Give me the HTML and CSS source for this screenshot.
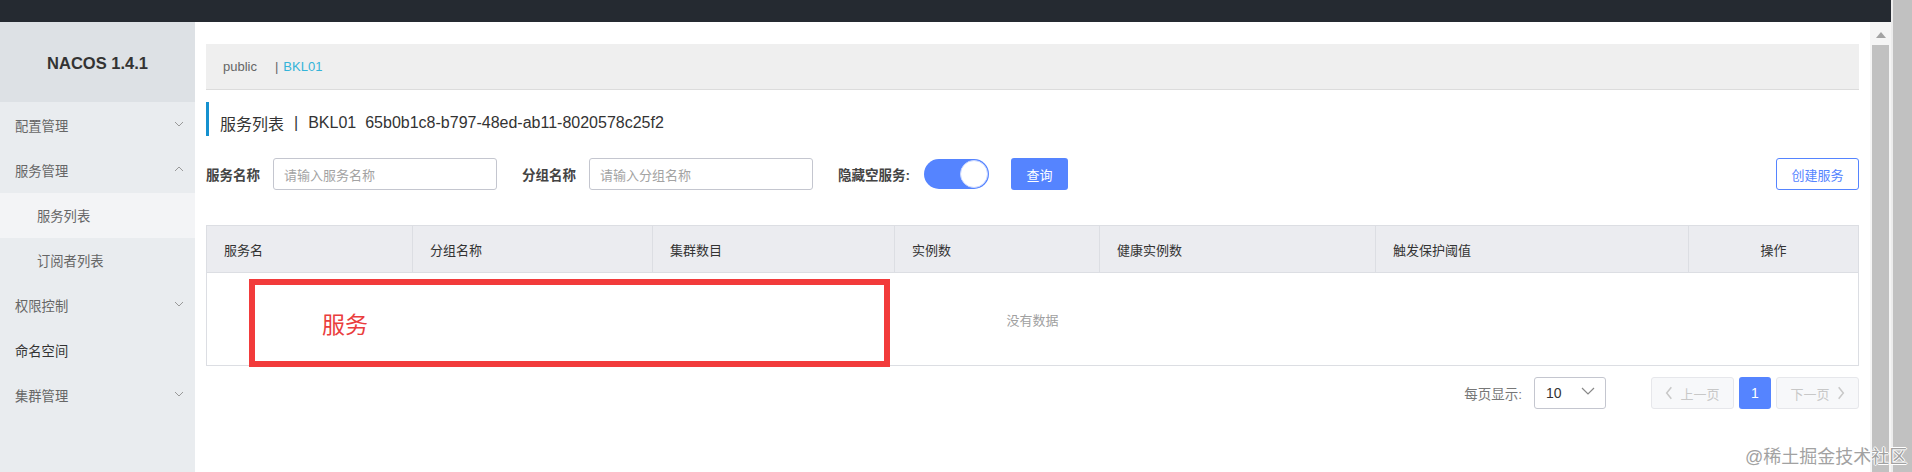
FILE: index.html
```html
<!DOCTYPE html>
<html lang="zh-CN">
<head>
<meta charset="utf-8">
<title>NACOS 1.4.1</title>
<link rel="stylesheet" href="styles.css">
</head>
<body>
<div class="screen">
  <div class="app">
    <header class="topbar"></header>
    <div class="main">
      <aside class="sidebar">
        <div class="logo">NACOS 1.4.1</div>
        <ul class="menu">
          <li class="menu-item"><span>配置管理</span><svg class="chev" viewBox="0 0 10 6"><polyline points="1,1 5,5 9,1"/></svg></li>
          <li class="menu-item"><span>服务管理</span><svg class="chev" viewBox="0 0 10 6"><polyline points="1,5 5,1 9,5"/></svg></li>
          <li class="menu-item sub active"><span>服务列表</span></li>
          <li class="menu-item sub"><span>订阅者列表</span></li>
          <li class="menu-item"><span>权限控制</span><svg class="chev" viewBox="0 0 10 6"><polyline points="1,1 5,5 9,1"/></svg></li>
          <li class="menu-item dark"><span>命名空间</span></li>
          <li class="menu-item"><span>集群管理</span><svg class="chev" viewBox="0 0 10 6"><polyline points="1,1 5,5 9,1"/></svg></li>
        </ul>
      </aside>
      <main class="content">
        <div class="breadcrumb">
          <span>public</span><span class="crumb-sep">|</span><span class="crumb-current">BKL01</span>
        </div>
        <div class="page-title">
          <span>服务列表</span><span class="title-sep">|</span><span>BKL01</span><span class="title-id">65b0b1c8-b797-48ed-ab11-8020578c25f2</span>
        </div>
        <div class="search">
          <span class="field-label">服务名称</span>
          <div class="input">请输入服务名称</div>
          <span class="field-label">分组名称</span>
          <div class="input">请输入分组名称</div>
          <span class="field-label toggle-label">隐藏空服务:</span>
          <div class="toggle"><div class="knob"></div></div>
          <div class="btn-primary">查询</div>
          <div class="btn-outline">创建服务</div>
        </div>
        <div class="table">
          <div class="thead">
            <div class="th">服务名</div>
            <div class="th">分组名称</div>
            <div class="th">集群数目</div>
            <div class="th">实例数</div>
            <div class="th">健康实例数</div>
            <div class="th">触发保护阈值</div>
            <div class="th center">操作</div>
          </div>
          <div class="tbody">没有数据</div>
          <div class="annot"><span>服务</span></div>
        </div>
        <div class="pager">
          <span class="pager-label">每页显示:</span>
          <div class="select"><span>10</span><svg class="sel-chev" viewBox="0 0 14 8"><polyline points="1,1 7,7 13,1"/></svg></div>
          <div class="pg-btn prev"><svg class="pg-chev" viewBox="0 0 6 12"><polyline points="5,1 1,6 5,11"/></svg><span>上一页</span></div>
          <div class="pg-num">1</div>
          <div class="pg-btn next"><span>下一页</span><svg class="pg-chev" viewBox="0 0 6 12"><polyline points="1,1 5,6 1,11"/></svg></div>
        </div>
      </main>
      <div class="vscroll-inner"><div class="arrow"></div><div class="thumb"></div></div>
    </div>
  </div>
  <div class="vscroll-outer"></div>
  <div class="watermark">@稀土掘金技术社区</div>
</div>
</body>
</html>
```
FILE: styles.css
```css
* { box-sizing: border-box; }
html, body { margin: 0; padding: 0; }
body {
  width: 1912px;
  height: 472px;
  overflow: hidden;
  background: #fff;
  color: #333;
  font-family: "Liberation Sans", "Noto Sans CJK SC", sans-serif;
  font-size: 13px;
}
.screen { position: relative; display: flex; width: 1912px; height: 472px; }
.app { width: 1891px; display: flex; flex-direction: column; }
.topbar { height: 22px; flex: none; background: #252a31; }
.main { flex: 1; display: flex; min-height: 0; }

.sidebar { width: 195px; flex: none; background: #e9ecef; display: flex; flex-direction: column; }
.logo {
  height: 80px;
  background: #dde1e5;
  display: flex; align-items: center; justify-content: center;
  font-weight: bold; font-size: 16.5px; color: #333;
  padding-top: 2px;
}
.menu { list-style: none; margin: 0; padding: 1px 0 0; }
.menu-item {
  height: 45px;
  display: flex; align-items: center; justify-content: space-between;
  padding: 0 11px 0 15px;
  color: #666; font-size: 13.3px;
}
.menu-item.sub { padding-left: 37px; }
.menu-item.active { background: #f3f4f6; }
.menu-item.dark { color: #333; }
.chev { width: 10px; height: 6px; fill: none; stroke: #999; stroke-width: 1; margin-top: -3px; }

.content { flex: 1; min-width: 0; padding: 22px 11px 0; }
.breadcrumb {
  height: 46px;
  background: #efefef;
  border-bottom: 1px solid #dcdcdc;
  display: flex; align-items: center;
  padding-left: 17px;
  color: #666; font-size: 13px;
}
.crumb-sep { margin-left: 18px; margin-right: 5px; }
.crumb-current { color: #34b4d9; }

.page-title {
  margin-top: 12px;
  height: 34px;
  border-left: 3px solid #1591cf;
  padding-left: 11px; padding-top: 7px;
  display: flex; align-items: center;
  font-size: 16px; color: #333;
}
.title-sep { margin: 0 10px; }
.title-id { margin-left: 9px; }

.search { margin-top: 22px; height: 32px; display: flex; align-items: center; }
.field-label { font-weight: bold; font-size: 13.5px; color: #444; margin-right: 13px; }
.toggle-label { margin-right: 14px; }
.input {
  width: 224px; height: 32px;
  border: 1px solid #c4c6cf; border-radius: 3px;
  padding: 0 10px;
  display: flex; align-items: center;
  color: #a3a3a3; font-size: 13px;
  margin-right: 25px;
}
.toggle {
  width: 65px; height: 30px;
  border-radius: 15px;
  background: #5584ff;
  display: flex; align-items: center; justify-content: flex-end;
  padding-right: 1px;
}
.knob { width: 28px; height: 28px; border-radius: 50%; background: #fff; border: 1px solid #c9d7ff; }
.btn-primary {
  margin-left: 22px;
  width: 57px; height: 32px;
  background: #5584ff; color: #fff;
  border-radius: 3px;
  display: flex; align-items: center; justify-content: center;
}
.btn-outline {
  margin-left: auto;
  width: 83px; height: 32px;
  border: 1px solid #5584ff; border-radius: 3px;
  color: #5584ff; background: #fff;
  display: flex; align-items: center; justify-content: center;
}

.table { position: relative; margin-top: 35px; border: 1px solid #dcdee3; }
.thead {
  display: grid;
  grid-template-columns: 205px 240px 242px 205px 276px 313px 1fr;
  height: 47px;
  background: #ebecf0;
  border-bottom: 1px solid #dcdee3;
}
.th { display: flex; align-items: center; padding-left: 17px; border-left: 1px solid #dcdee3; color: #333; }
.th:first-child { border-left: none; }
.th.center { justify-content: center; padding-left: 0; }
.tbody { height: 92px; display: flex; align-items: center; justify-content: center; color: #a0a0a0; }
.annot {
  position: absolute; left: 42px; top: 53px;
  width: 641px; height: 88px;
  border: 6px solid #f23b3b;
  display: flex; align-items: center;
  padding-left: 67px;
  color: #ea3d3d; font-size: 23px;
}

.pager { margin-top: 11px; height: 32px; display: flex; align-items: center; justify-content: flex-end; }
.pager-label { color: #777; margin-right: 12px; font-size: 13.5px; }
.select {
  width: 72px; height: 32px;
  border: 1px solid #c4c6cf; border-radius: 3px;
  display: flex; align-items: center; justify-content: space-between;
  padding: 0 10px 0 11px;
  font-size: 14px; color: #333;
  margin-right: 45px;
}
.sel-chev { width: 14px; height: 8px; fill: none; stroke: #888; stroke-width: 1.2; margin-top: -4px; }
.pg-btn {
  width: 83px; height: 32px;
  background: #f7f8fa; border: 1px solid #e6e7eb; border-radius: 3px;
  display: flex; align-items: center; justify-content: center; gap: 7px;
  color: #c8c8c8;
}
.pg-chev { width: 8px; height: 14px; fill: none; stroke: #c8c8c8; stroke-width: 1.3; }
.pg-num {
  width: 32px; height: 32px; margin: 0 5px;
  background: #5584ff; color: #fff; border-radius: 3px;
  display: flex; align-items: center; justify-content: center;
  font-size: 14px;
}

.vscroll-inner { width: 21px; flex: none; background: #f5f5f5; display: flex; flex-direction: column; align-items: center; padding: 10px 2px 0; }
.arrow { width: 0; height: 0; border-left: 5px solid transparent; border-right: 5px solid transparent; border-bottom: 6px solid #a3a3a3; }
.thumb { margin-top: 7px; width: 17px; flex: 1; background: #c1c1c1; }
.vscroll-outer { width: 21px; flex: none; background: #c1c1c1; border-left: 2px solid #ececec; }

.watermark {
  position: absolute; left: 1745px; top: 445px;
  z-index: 2;
  font-size: 18px; line-height: 24px;
  color: #a2a2a2;
  text-shadow: 1px 0 0 #fff, -1px 0 0 #fff, 0 1px 0 #fff, 0 -1px 0 #fff;
  white-space: nowrap;
}
```
